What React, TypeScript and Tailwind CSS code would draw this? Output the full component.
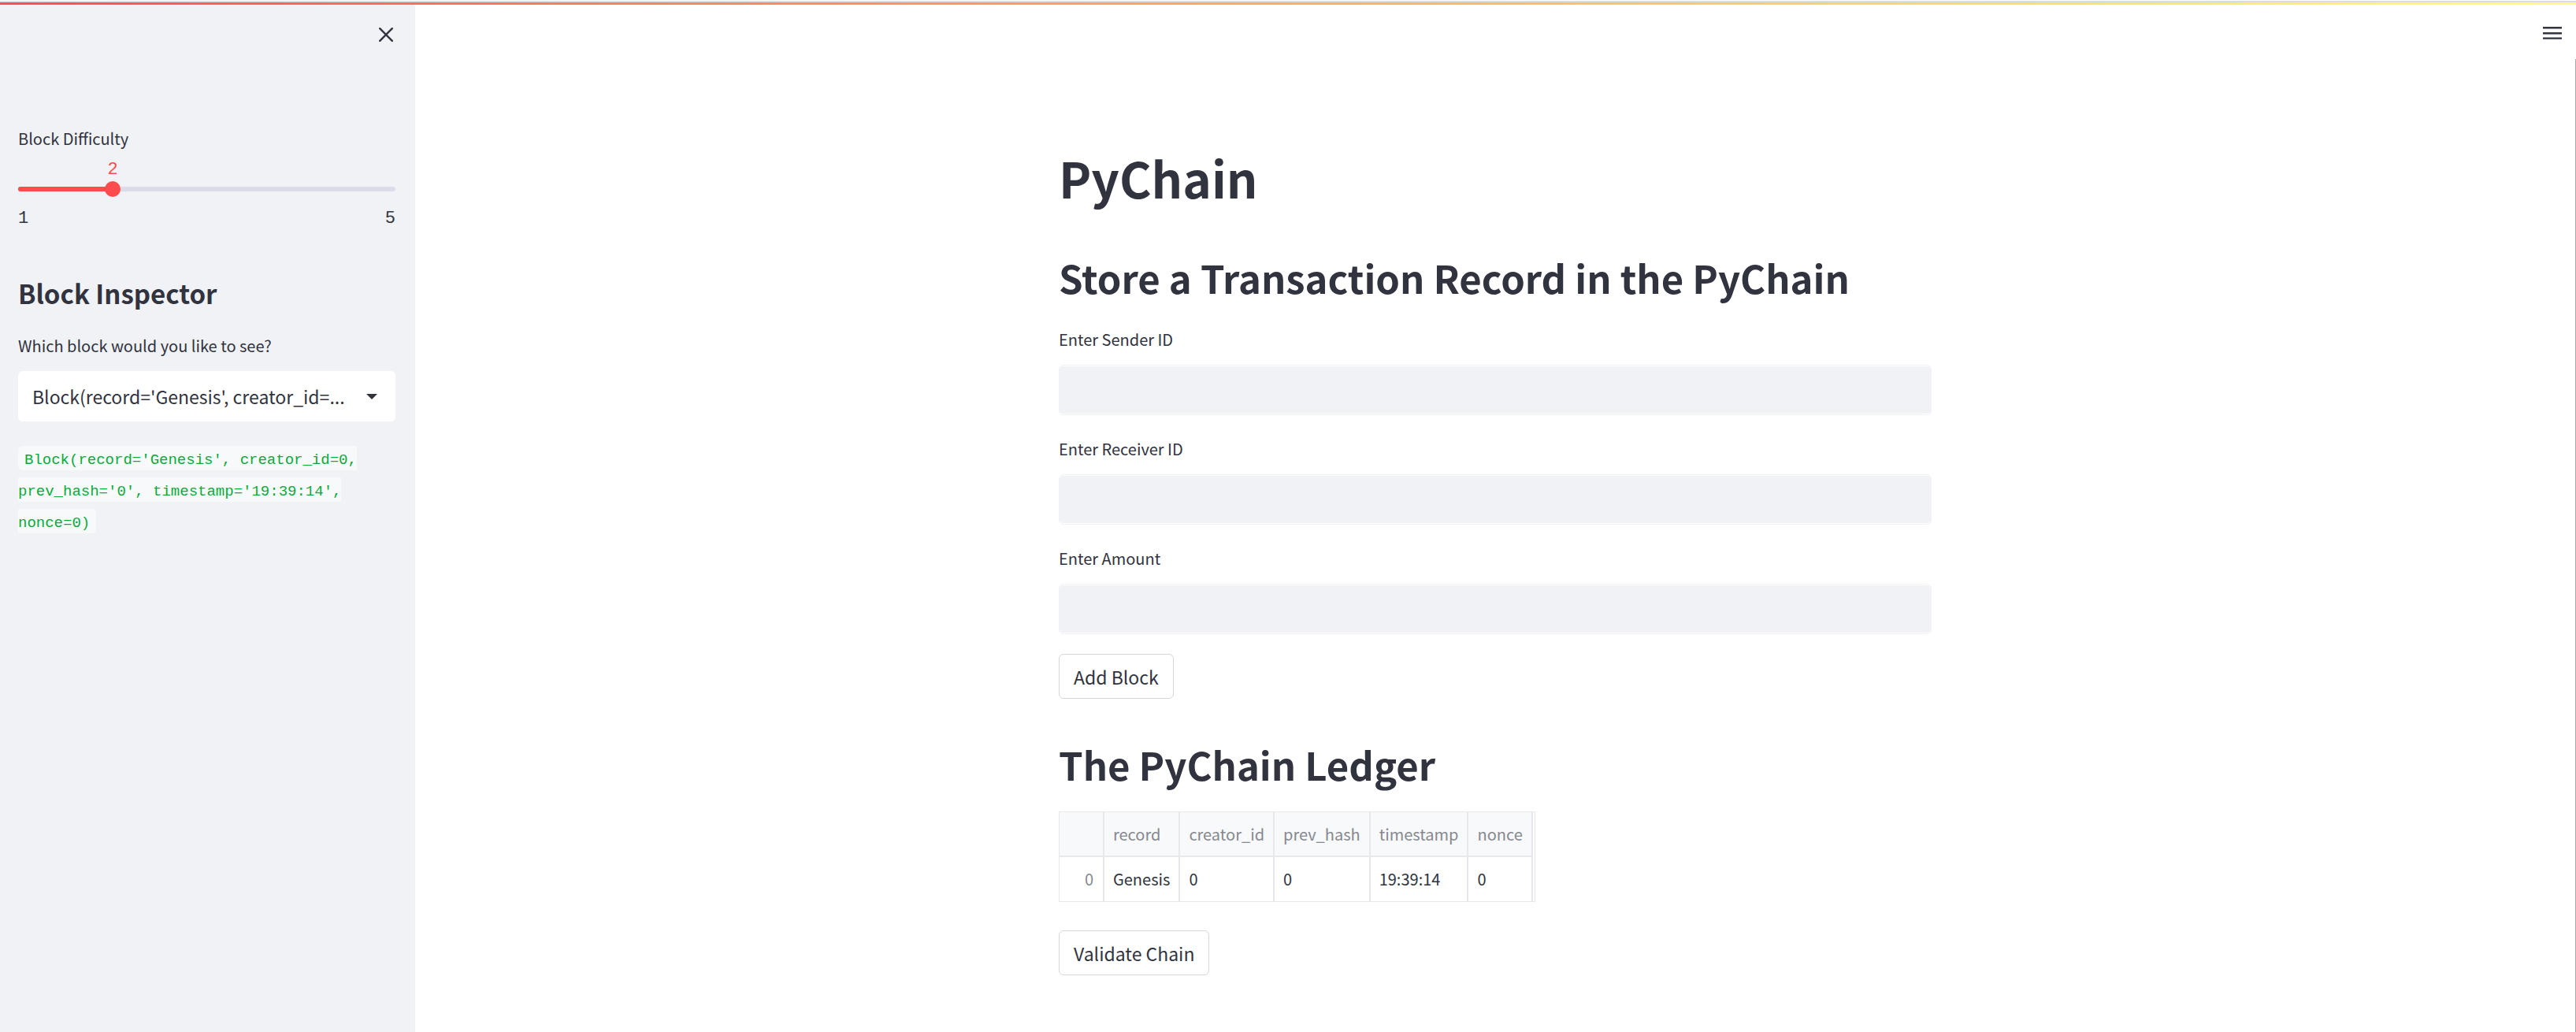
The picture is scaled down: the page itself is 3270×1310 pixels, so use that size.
import { useState } from 'react';

const blockText = "Block(record='Genesis', creator_id=0, prev_hash='0', timestamp='19:39:14', nonce=0)";
const blockLabel = `${blockText.slice(0, 35)}...`;

const columns = ['record', 'creator_id', 'prev_hash', 'timestamp', 'nonce'];
const rows = [['Genesis', '0', '0', '19:39:14', '0']];

function Field({ id, label }: { id: string; label: string }) {
  return (
    <div>
      <label htmlFor={id} className="block text-[20px] leading-[30px]">
        {label}
      </label>
      <input
        id={id}
        type="text"
        className="mt-[17px] block h-16 w-full rounded-md border border-[#f0f2f6] bg-[#f0f2f6] px-4 text-[23px] shadow-[inset_0_1px_0_#ffffff,inset_0_-1px_0_#ffffff] outline-none"
      />
    </div>
  );
}

function ActionButton({ children }: { children: string }) {
  return (
    <button
      type="button"
      className="flex h-[57px] items-center rounded-md border border-[#d6d6d8] bg-white px-[18px] text-[23px] leading-8"
    >
      {children}
    </button>
  );
}

function Sidebar() {
  const [difficulty, setDifficulty] = useState(2);
  const percent = ((difficulty - 1) / 4) * 100;

  return (
    <aside className="w-[527px] shrink-0 bg-[#f0f2f6] pr-[25px] pl-[23px]">
      <div className="flex h-[155px] items-start justify-end pt-[22px]">
        <button type="button" aria-label="Close sidebar" className="-mr-1 flex size-8 items-center justify-center">
          <svg viewBox="0 0 18 18" className="size-[18px]" fill="none" stroke="#31333f" strokeWidth="2.4" strokeLinecap="round">
            <path d="M1.2 1.2 16.8 16.8M16.8 1.2 1.2 16.8" />
          </svg>
        </button>
      </div>

      <label htmlFor="difficulty" className="block text-[20px] leading-[30px]">
        Block Difficulty
      </label>
      <div className="mt-[13px] flex h-6">
        <div className="text-right" style={{ width: `${percent}%` }}>
          <output htmlFor="difficulty" className="-mr-[7px] block font-['Liberation_Mono',monospace] text-[22px] leading-6 text-[#ff4b4b]">
            {difficulty}
          </output>
        </div>
      </div>
      <div className="relative mt-[2px] flex h-5 items-center">
        <div className="h-[6px] w-full overflow-hidden rounded-full bg-[#dadde9]">
          <div className="h-full bg-[#ff4b4b]" style={{ width: `${percent}%` }} />
        </div>
        <input
          id="difficulty"
          type="range"
          min={1}
          max={5}
          value={difficulty}
          onChange={(e) => setDifficulty(Number(e.target.value))}
          className="absolute inset-y-0 -left-[10px] w-[calc(100%+20px)] appearance-none bg-transparent [&::-webkit-slider-thumb]:size-5 [&::-webkit-slider-thumb]:appearance-none [&::-webkit-slider-thumb]:rounded-full [&::-webkit-slider-thumb]:bg-[#ff4b4b]"
        />
      </div>
      <div className="mt-4 flex justify-between font-['Liberation_Mono',monospace] text-[22px] leading-6">
        <span>1</span>
        <span>5</span>
      </div>

      <h2 className="mt-[62px] text-[33px] leading-10 font-bold">Block Inspector</h2>

      <label htmlFor="block" className="mt-8 block text-[20px] leading-[30px]">
        Which block would you like to see?
      </label>
      <div className="relative mt-[17px]">
        <select
          id="block"
          className="block h-16 w-full appearance-none rounded-md bg-white pr-12 pl-[18px] text-[23px] leading-8 outline-none"
        >
          <option>{blockLabel}</option>
        </select>
        <svg viewBox="0 0 14 7" className="pointer-events-none absolute top-[29px] right-[23px] h-[7px] w-[14px]" fill="#31333f">
          <path d="M0 0h14L7 7z" />
        </svg>
      </div>

      <p className="mt-[29px] font-['Liberation_Mono',monospace] text-[19px] leading-10">
        <code className="rounded-md bg-[#f8f9fb] px-2 pt-[7px] pb-[2px] font-['Liberation_Mono',monospace] text-[#09ab3b]">
          {blockText}
        </code>
      </p>
    </aside>
  );
}

function Ledger() {
  return (
    <div className="mt-[30px] w-fit border border-[#e6e8eb] pr-[2px]">
      <table className="border-separate border-spacing-0 text-left text-[20px] leading-8">
        <thead>
          <tr className="bg-[#f8f9fb] text-[#86888f]">
            <th aria-label="index" className="h-[57px] w-[57px] border-r-2 border-b-2 border-[#e6e8eb]" />
            {columns.map((name) => (
              <th key={name} scope="col" className="h-[57px] border-r-2 border-b-2 border-[#e6e8eb] px-[11px] font-normal">
                {name}
              </th>
            ))}
          </tr>
        </thead>
        <tbody>
          {rows.map((row, i) => (
            <tr key={i}>
              <th scope="row" className="h-14 border-r-2 border-[#e6e8eb] pr-3 text-right font-normal text-[#86888f]">
                {i}
              </th>
              {row.map((cell, j) => (
                <td key={j} className="h-14 border-r-2 border-[#e6e8eb] px-[11px]">
                  {cell}
                </td>
              ))}
            </tr>
          ))}
        </tbody>
      </table>
    </div>
  );
}

export default function App() {
  return (
    <div className="flex min-h-screen flex-col bg-white font-['Noto_Sans_CJK_SC',sans-serif] text-[#31333f]">
      <div className="h-[6px] border-t border-white bg-[#d9dde1] pt-[2px]">
        <div className="h-[3px] bg-linear-to-r from-[#ff4b4b] to-[#fffd80]" />
      </div>
      <div className="flex grow">
        <Sidebar />
        <div className="flex grow flex-col">
          <header className="flex h-[69px] items-start justify-end pt-5 pr-[14px]">
            <button type="button" aria-label="Menu" className="flex size-8 items-center justify-center">
              <svg viewBox="0 0 24 18" className="h-[18px] w-6" fill="#31333f">
                <path d="M0 1h24v2.4H0zM0 8h24v2.4H0zM0 14.4h24v2.4H0z" />
              </svg>
            </button>
          </header>
          <main className="grow border-r border-[#a9a9a9]">
            <div className="mx-auto w-full max-w-[1108px] pt-[110px]">
              <h1 className="text-[62px] leading-[80px] font-bold">PyChain</h1>
              <h2 className="mt-[57px] text-[49px] leading-[60px] font-bold">
                Store a Transaction Record in the PyChain
              </h2>
              <div className="mt-[34px] flex flex-col gap-7">
                <Field id="sender" label="Enter Sender ID" />
                <Field id="receiver" label="Enter Receiver ID" />
                <Field id="amount" label="Enter Amount" />
              </div>
              <div className="mt-[25px]">
                <ActionButton>Add Block</ActionButton>
              </div>
              <h2 className="mt-[53px] text-[49px] leading-[60px] font-bold">The PyChain Ledger</h2>
              <Ledger />
              <div className="mt-9">
                <ActionButton>Validate Chain</ActionButton>
              </div>
            </div>
          </main>
        </div>
      </div>
    </div>
  );
}
